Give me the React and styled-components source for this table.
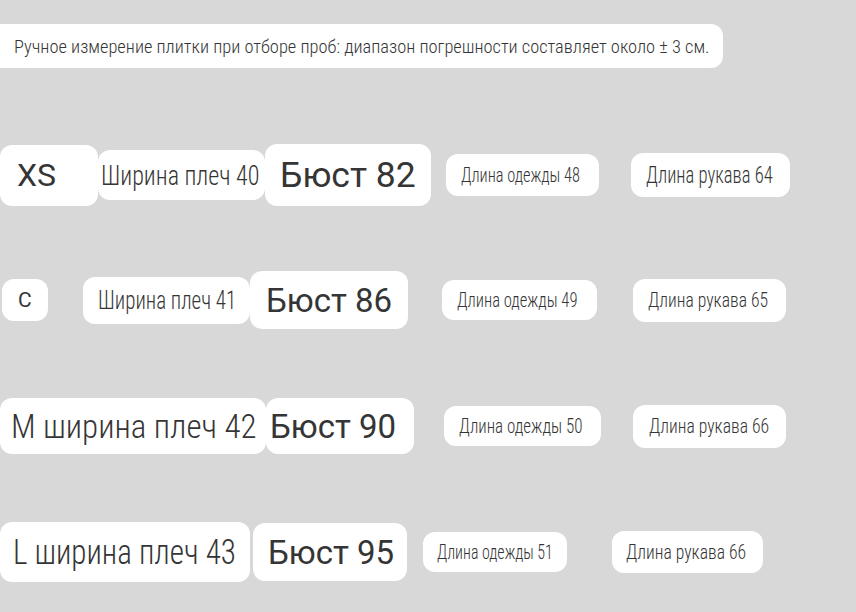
import React from "react";
import styled, { createGlobalStyle } from "styled-components";

const Global = createGlobalStyle`
  html, body { margin: 0; padding: 0; background: #d8d8d8; }
  body { width: 856px; height: 612px; overflow: hidden; }
`;

const Page = styled.div`
  display: flex;
  flex-direction: column;
  padding-top: 24px;
  font-family: "Roboto", "Liberation Sans", sans-serif;
  color: #353535;
`;

const Row = styled.div`
  display: flex;
  align-items: center;
  height: 64px;
  margin-top: ${(p) => p.$mt}px;
`;

const Note = styled.div`
  width: 723px;
  height: 44px;
  box-sizing: border-box;
  background: #fff;
  border-radius: 0 12px 12px 0;
  display: flex;
  align-items: center;
  padding-left: 14px;
  font-family: "Roboto Condensed", "Roboto", sans-serif;
  font-weight: 350;
  font-size: 18.4px;
  white-space: nowrap;
`;

const Pill = styled.div`
  flex: none;
  box-sizing: border-box;
  background: #fff;
  border-radius: 12px;
  display: flex;
  align-items: center;
  white-space: nowrap;
  width: ${(p) => p.$w}px;
  height: ${(p) => p.$h}px;
  margin-left: ${(p) => p.$ml || 0}px;
  padding-left: ${(p) => p.$pl}px;
  font-size: ${(p) => p.$size}px;
  font-family: ${(p) =>
    p.$cond ? '"Roboto Condensed", "Roboto", sans-serif' : '"Roboto", sans-serif'};
  font-weight: ${(p) => (p.$cond ? 350 : 400)};
`;

const Label = styled.span`
  display: inline-block;
  transform: scaleX(${(p) => p.$sx || 1});
  transform-origin: left center;
`;

const rows = [
  {
    mt: 75,
    items: [
      { t: "XS", w: 98, h: 61, pl: 17, size: 32 },
      { t: "Ширина плеч 40", w: 167, h: 50, pl: 3, size: 28, cond: true, sx: 0.86 },
      { t: "Бюст 82", w: 166, h: 62, pl: 15, size: 35.5 },
      { t: "Длина одежды 48", ml: 15, w: 153, h: 42, pl: 15, size: 21, cond: true, sx: 0.78 },
      { t: "Длина рукава 64", ml: 32, w: 159, h: 44, pl: 15, size: 23, cond: true, sx: 0.81 },
    ],
  },
  {
    mt: 61,
    items: [
      { t: "С", ml: 2, w: 46, h: 42, pl: 16, size: 21 },
      { t: "Ширина плеч 41", ml: 35, w: 167, h: 47, pl: 15, size: 25, cond: true, sx: 0.84 },
      { t: "Бюст 86", w: 158, h: 58, pl: 16, size: 33 },
      { t: "Длина одежды 49", ml: 34, w: 155, h: 40, pl: 15, size: 21, cond: true, sx: 0.79 },
      { t: "Длина рукава 65", ml: 36, w: 153, h: 43, pl: 15, size: 21, cond: true, sx: 0.84 },
    ],
  },
  {
    mt: 62,
    items: [
      { t: "М ширина плеч 42", w: 266, h: 56, pl: 11, size: 33, cond: true, sx: 1 },
      { t: "Бюст 90", w: 148, h: 56, pl: 4, size: 33 },
      { t: "Длина одежды 50", ml: 30, w: 157, h: 40, pl: 15, size: 21, cond: true, sx: 0.81 },
      { t: "Длина рукава 66", ml: 32, w: 153, h: 43, pl: 16, size: 21, cond: true, sx: 0.84 },
    ],
  },
  {
    mt: 62,
    items: [
      { t: "L ширина плеч 43", w: 250, h: 60, pl: 13, size: 35, cond: true, sx: 0.89 },
      { t: "Бюст 95", ml: 3, w: 154, h: 58, pl: 15, size: 33 },
      { t: "Длина одежды 51", ml: 16, w: 144, h: 40, pl: 14, size: 21, cond: true, sx: 0.76 },
      { t: "Длина рукава 66", ml: 45, w: 151, h: 42, pl: 14, size: 21, cond: true, sx: 0.84 },
    ],
  },
];

export default function App() {
  return (
    <>
      <Global />
      <Page>
        <Note>
          Ручное измерение плитки при отборе проб: диапазон погрешности составляет около ± 3 см.
        </Note>
        {rows.map((r, i) => (
          <Row key={i} $mt={r.mt}>
            {r.items.map((it, j) => (
              <Pill
                key={j}
                $w={it.w}
                $h={it.h}
                $ml={it.ml}
                $pl={it.pl}
                $size={it.size}
                $cond={it.cond}
              >
                <Label $sx={it.sx}>{it.t}</Label>
              </Pill>
            ))}
          </Row>
        ))}
      </Page>
    </>
  );
}
